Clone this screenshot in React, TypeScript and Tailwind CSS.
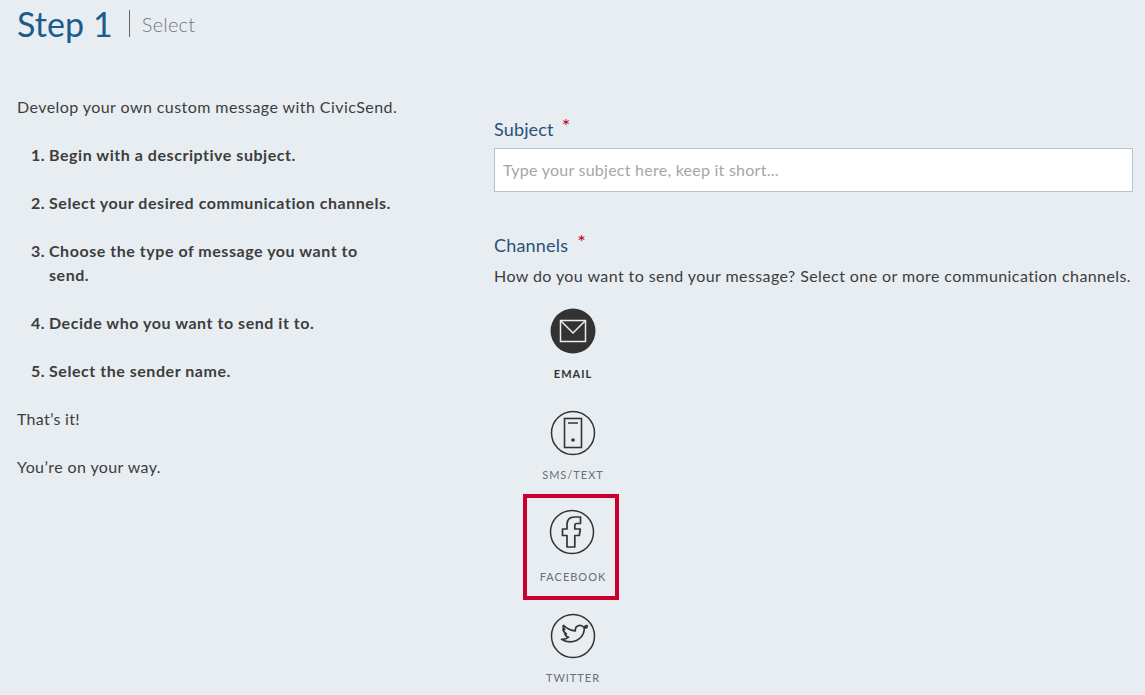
const Circle = ({ children, filled }: { children: React.ReactNode; filled?: boolean }) => (
  <svg width="46" height="46" viewBox="0 0 46 46" fill="none">
    <circle cx="23" cy="23" r={filled ? 22.5 : 21.5} fill={filled ? "#333333" : "none"} stroke={filled ? "none" : "#333333"} strokeWidth="1.5" />
    {children}
  </svg>
);

const items = [
  {
    label: "EMAIL",
    active: true,
    icon: (
      <Circle filled>
        <rect x="10.5" y="12.5" width="25" height="21" stroke="#e8edf2" strokeWidth="1.5" />
        <path d="M11 13l12 12 12-12" stroke="#e8edf2" strokeWidth="1.5" />
      </Circle>
    ),
  },
  {
    label: "SMS/TEXT",
    icon: (
      <div className="-mb-px">
        <Circle>
          <rect x="14.5" y="8.500" width="17" height="29" stroke="#333333" strokeWidth="1.600" />
          <path d="M18 13h10" stroke="#333333" strokeWidth="1.500" />
          <circle cx="23" cy="30" r="1.800" fill="#333333" />
        </Circle>
      </div>
    ),
  },
  {
    label: "FACEBOOK",
    boxed: true,
    icon: (
      <div className="-mt-[2px] mb-[2px] -ml-[3px]">
        <Circle>
          <path
            d="M18 38V26.500h-4.500v-6.500H18v-4.500c0-4.800 3-7.500 7.500-7.500h6v6.500h-3.500c-1.500 0-2.200.8-2.200 2.200V20h5.500l-1 6.500h-4.500V38z"
            stroke="#333333"
            strokeWidth="1.700"
            strokeLinejoin="round"
          />
        </Circle>
      </div>
    ),
  },
  {
    label: "TWITTER",
    icon: (
      <div className="-mb-px">
        <Circle>
          <path
            d="M37 14.500c-1 .4-2 .7-3 .8 1-.6 1.800-1.600 2.200-2.700-1 .6-2 1-3.200 1.200-2.700-2.800-7.700-.9-7.700 3.100 0 .3 0 .7.100 1-3.800-.3-8-1.800-12-5.500-.6 1.200 0 3 1.400 4.200-.7 0-1.300-.1-1.900-.4.300 2.400 1.600 3.900 3.600 4.700-.6.100-1.200.1-1.800 0 .6 1.700 2 2.900 4 3.300-1.800 1.400-4 2.300-7.200 2 2.700 1.700 5.700 2.700 8.500 2.700 9 0 14.500-7 14.300-13.900 1-.7 2-1.500 2.700-2.500z"
            stroke="#333333"
            strokeWidth="1.600"
            strokeLinejoin="round"
          />
        </Circle>
      </div>
    ),
  },
];

const steps = [
  "Begin with a descriptive subject.",
  "Select your desired communication channels.",
  "Choose the type of message you want to send.",
  "Decide who you want to send it to.",
  "Select the sender name.",
];

export default function App() {
  return (
    <div className="h-[695px] w-[1145px] overflow-hidden bg-[#e8edf2] px-[17px] font-['Lato','Noto_Sans',sans-serif] text-[16px] leading-[24px] text-[#3d3d3d]">
      <div className="flex h-[47px] items-center">
        <span className="text-[34px] font-normal leading-[40px] tracking-[0.1px] text-[#1b5c8e]">Step 1</span>
        <span className="ml-[16px] h-[27px] w-px bg-[#666666]" />
        <span className="ml-3 text-[20px] font-light tracking-[0.2px] text-[#75797d]">Select</span>
      </div>
      <div className="flex">
        <div className="w-[477px] shrink-0 pt-[48px]">
          <p className="tracking-[0.43px]">Develop your own custom message with CivicSend.</p>
          <ol className="mt-6 flex w-[380px] flex-col gap-6 pl-[14px] font-bold tracking-[0.54px]">
            {steps.map((s, i) => (
              <li key={s} className="flex">
                <span className="w-[18px] shrink-0">{i + 1}.</span>
                <span>{s}</span>
              </li>
            ))}
          </ol>
          <p className="mt-6 tracking-[0.3px]">That’s it!</p>
          <p className="mt-6 tracking-[0.4px]">You’re on your way.</p>
        </div>
        <div className="w-[639px] shrink-0 pt-[70px]">
          <label className="flex text-[18px] leading-[24px] tracking-[0.15px] text-[#28507c]">
            Subject<span className="ml-[8px] -mt-[4px] text-[20px] text-[#c0002a]">*</span>
          </label>
          <input
            readOnly
            placeholder="Type your subject here, keep it short..."
            className="mt-[7px] block h-[44px] w-full border border-[#b5c3d1] bg-white px-2 pb-[2px] text-[16px] tracking-[0.25px] outline-none placeholder:text-[#a6a6a6]"
          />
          <label className="mt-[41px] flex text-[18px] leading-[24px] tracking-[0.2px] text-[#28507c]">
            Channels<span className="ml-[9px] -mt-[4px] text-[20px] text-[#c0002a]">*</span>
          </label>
          <p className="mt-[7px] tracking-[0.42px]">
            How do you want to send your message? Select one or more communication channels.
          </p>
          <div className="mt-[20px] flex w-[158px] flex-col items-center">
            {items.map((it) => (
              <div key={it.label} className="relative flex h-[101.67px] w-full flex-col items-center">
                {it.icon}
                <span
                  className={
                    it.active
                      ? "mt-[8px] text-[11px] font-bold tracking-[1px] text-[#333333]"
                      : "mt-[8px] text-[11px] tracking-[1px] text-[#6a6f78]"
                  }
                >
                  {it.label}
                </span>
                {it.boxed && (
                  <div className="absolute -top-[17px] left-[29px] h-[106px] w-[96px] border-4 border-[#c8002c]" />
                )}
              </div>
            ))}
          </div>
        </div>
      </div>
    </div>
  );
}
